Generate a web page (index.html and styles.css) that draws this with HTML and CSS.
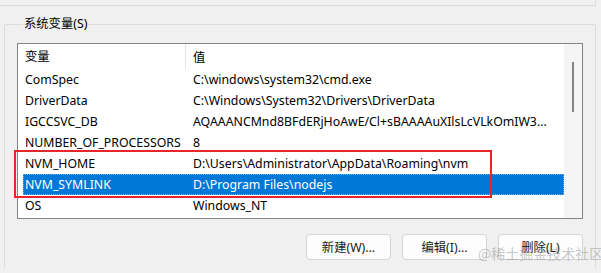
FILE: index.html
```html
<!DOCTYPE html>
<html lang="zh-CN">
<head>
    <meta charset="UTF-8">
    <title>系统变量</title>
    <link rel="stylesheet" href="styles.css">
</head>
<body>
    <!-- tail of the user variables group above -->
    <div class="prev-group"></div>

    <fieldset class="group">
        <legend>系统变量(S)</legend>

        <div class="listview">
            <div class="list-body">
                <div class="row header">
                    <div class="cell name">变量</div>
                    <div class="cell value">值</div>
                </div>
                <div class="row">
                    <div class="cell name">ComSpec</div>
                    <div class="cell value">C:\windows\system32\cmd.exe</div>
                </div>
                <div class="row">
                    <div class="cell name">DriverData</div>
                    <div class="cell value">C:\Windows\System32\Drivers\DriverData</div>
                </div>
                <div class="row">
                    <div class="cell name">IGCCSVC_DB</div>
                    <div class="cell value">AQAAANCMnd8BFdERjHoAwE/Cl+sBAAAAuXIlsLcVLkOmIW3...</div>
                </div>
                <div class="row">
                    <div class="cell name">NUMBER_OF_PROCESSORS</div>
                    <div class="cell value">8</div>
                </div>
                <div class="row">
                    <div class="cell name">NVM_HOME</div>
                    <div class="cell value">D:\Users\Administrator\AppData\Roaming\nvm</div>
                </div>
                <div class="row selected">
                    <div class="cell name">NVM_SYMLINK</div>
                    <div class="cell value">D:\Program Files\nodejs</div>
                </div>
                <div class="row">
                    <div class="cell name">OS</div>
                    <div class="cell value">Windows_NT</div>
                </div>

                <!-- red annotation box around the nvm entries -->
                <div class="mark"></div>
            </div>
            <div class="scrollbar">
                <div class="thumb"></div>
            </div>
        </div>

        <div class="buttons">
            <button>新建(W)...</button>
            <button>编辑(I)...</button>
            <button>删除(L)</button>
        </div>
    </fieldset>

    <div class="watermark">@稀土掘金技术社区</div>
</body>
</html>
```

FILE: styles.css
```css
/* Windows environment variables dialog */
body {
    margin: 0;
    background: #f0f0f0;
    font-family: "Noto Sans", "Noto Sans CJK SC", sans-serif;
    font-size: 12.3px;
    color: #000;
    width: 601px;
    height: 273px;
    overflow: hidden;
    position: relative;
}

.prev-group {
    width: 595px;
    height: 5px;
    border-bottom: 1px solid #dcdcdc;
    border-right: 1px solid #dcdcdc;
}

.group {
    margin: 11px 0 0 4px;
    width: 566px;
    height: 238px;
    padding: 12px 12px 0 12px;
    border: 1px solid #dcdcdc;
    border-bottom: none;
    border-radius: 2px 2px 0 0;
}

.group legend {
    padding: 0 1px;
    margin-left: 6px;
    font-size: 12.3px;
    line-height: 14px;
}

.listview {
    display: flex;
    height: 174px;
    border: 1px solid #838383;
    background: #fff;
}

.list-body {
    flex: 1;
    position: relative;
    padding-left: 5px;
}

.row {
    display: flex;
    height: 21px;
    align-items: center;
}

.row.header {
    height: 25px;
}

.cell {
    white-space: nowrap;
    overflow: hidden;
}

.cell.name {
    width: 161px;
    padding-left: 2px;
}

.cell.value {
    flex: 1;
    padding-left: 7px;
}

.header .cell.name {
    border-right: 1px solid #e5e5e5;
    height: 25px;
    line-height: 25px;
    width: 160px;
}

.row.selected {
    background: #0078d7;
    color: #fff;
    outline: 1px dotted #6fb0e8;
    outline-offset: -1px;
}

.mark {
    position: absolute;
    left: -4px;
    top: 106px;
    width: 474px;
    height: 44px;
    border: 2px solid #e8262a;
}

.scrollbar {
    width: 18px;
    background: #f5f5f5;
    position: relative;
}

.thumb {
    position: absolute;
    left: 8px;
    top: 18px;
    width: 2px;
    height: 50px;
    background: #858585;
}

.buttons {
    display: flex;
    justify-content: flex-end;
    gap: 11px;
    margin-top: 15px;
}

.buttons button {
    width: 85px;
    height: 26px;
    padding: 0;
    border: 1px solid #d5d5d5;
    border-radius: 4px;
    background: #fdfdfd;
    font-family: "Noto Sans", "Noto Sans CJK SC", sans-serif;
    font-size: 12.3px;
    color: #1a1a1a;
}

.watermark {
    position: absolute;
    left: 478px;
    top: 243px;
    white-space: nowrap;
    font-family: "Noto Sans CJK SC", sans-serif;
    font-size: 14px;
    color: rgba(150, 150, 150, 0.55);
}
```
